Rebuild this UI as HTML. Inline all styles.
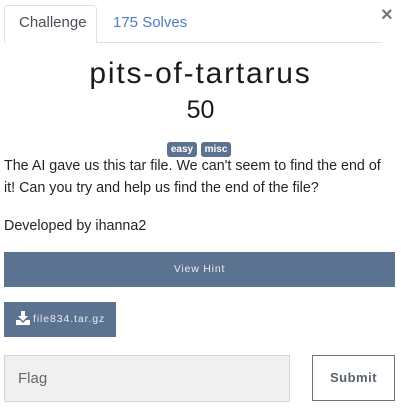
<!DOCTYPE html>
<html><head><style>
*{margin:0;padding:0;box-sizing:border-box}
body{width:401px;height:409px;background:#fff;font-family:"Liberation Sans",sans-serif;color:#212529;position:relative;overflow:hidden}
.a{position:absolute}
</style></head><body>
<div class="a" style="left:4px;top:5px;width:93px;height:38px;border:1px solid #dee2e6;border-bottom:none;border-radius:4px 4px 0 0;background:#fff;z-index:2"></div>
<div class="a" style="left:4px;top:42px;width:378px;height:1px;background:#dee2e6"></div>
<div class="a" style="left:19px;top:14px;font-size:15px;color:#495057;z-index:3">Challenge</div>
<div class="a" style="left:113px;top:14px;font-size:15px;color:#4a7fc1">175 Solves</div>
<div class="a" style="left:381px;top:4px;font-size:20px;font-weight:bold;color:#777">×</div>
<div class="a" style="left:0;width:401px;top:57px;text-align:center;font-size:30px;letter-spacing:1.8px;color:#1a1a1a">pits-of-tartarus</div>
<div class="a" style="left:0;width:401px;top:96px;text-align:center;font-size:25px;color:#1a1a1a">50</div>
<div class="a" style="left:167px;top:142px;width:30px;height:15px;background:#5b7290;border-radius:3px;color:#fff;font-size:10px;font-weight:bold;text-align:center;line-height:15px">easy</div>
<div class="a" style="left:201px;top:142px;width:30px;height:15px;background:#5b7290;border-radius:3px;color:#fff;font-size:10px;font-weight:bold;text-align:center;line-height:15px">misc</div>
<div class="a" style="left:4px;top:155px;width:382px;font-size:14.3px;line-height:22px;color:#212529">The AI gave us this tar file. We can't seem to find the end of it! Can you try and help us find the end of the file?</div>
<div class="a" style="left:4px;top:215px;font-size:14.3px;line-height:22px">Developed by ihanna2</div>
<div class="a" style="left:4px;top:252px;width:391px;height:35px;background:#5b7290;color:#e8ecf2;font-size:10.5px;letter-spacing:0.8px;text-align:center;line-height:35px">View Hint</div>
<div class="a" style="left:4px;top:302px;width:112px;height:35px;background:#5b7290;color:#e8ecf2;font-size:10.5px;letter-spacing:0.9px;line-height:35px;padding-left:29px">file834.tar.gz</div>
<svg class="a" style="left:16px;top:311px" width="14" height="14" viewBox="0 0 14 14"><path d="M5 0h4v5h3l-5 5-5-5h3z" fill="#fff"/><path d="M0 9h4l3 3 3-3h4v5H0z" fill="#fff"/></svg>
<div class="a" style="left:4px;top:355px;width:286px;height:47px;background:#f0f0f0;border:1px solid #d4d4d4;font-size:15px;color:#666;line-height:45px;padding-left:13px">Flag</div>
<div class="a" style="left:312px;top:355px;width:83px;height:46px;border:1px solid #6c757d;background:#fff;font-size:13px;font-weight:bold;color:#5a6470;text-align:center;line-height:44px;letter-spacing:0.5px">Submit</div>
</body></html>
